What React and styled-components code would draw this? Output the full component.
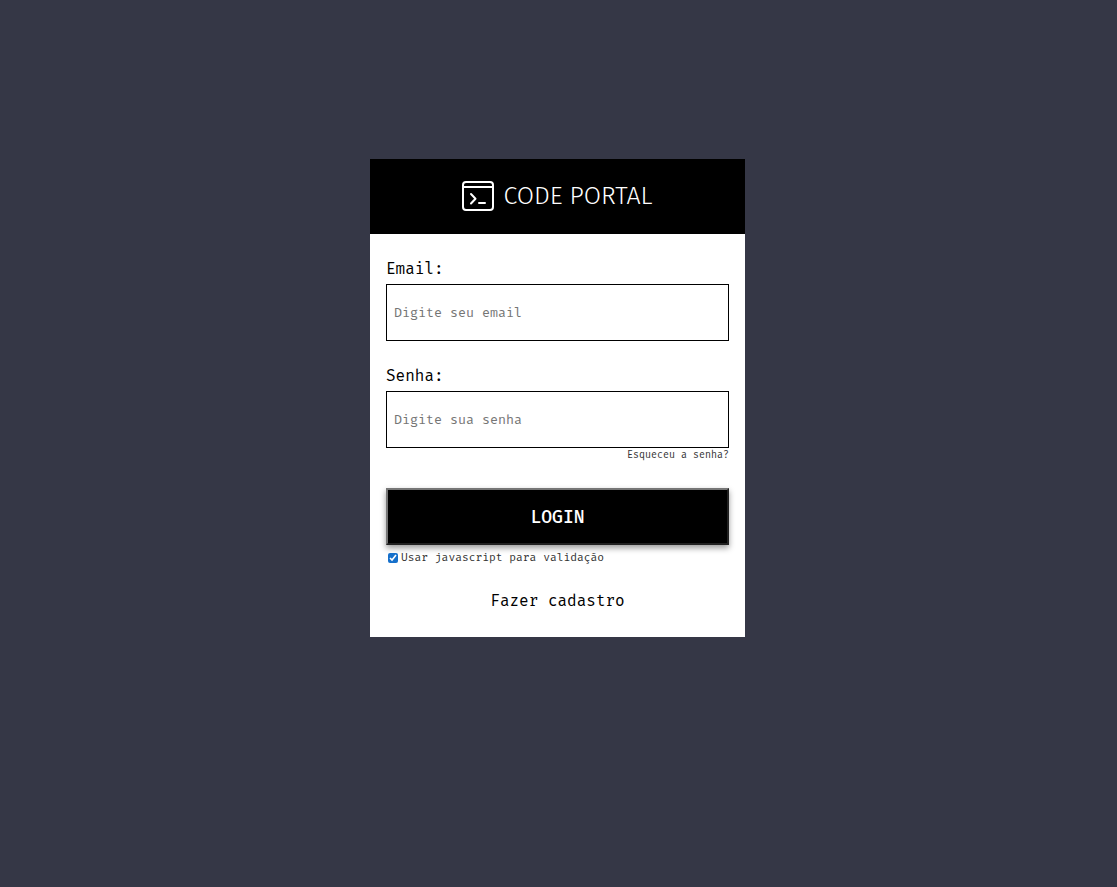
import React from "react";
import styled, { createGlobalStyle } from "styled-components";

const mono = `"Fira Mono", "Fira Code", "DejaVu Sans Mono", monospace`;
const code = `"Fira Code", "Fira Mono", "DejaVu Sans Mono", monospace`;

const GlobalStyle = createGlobalStyle`
  * {
    box-sizing: border-box;
  }
  body {
    margin: 0;
    background: #353746;
    color: #000;
    font-family: ${mono};
    font-size: 16px;
    line-height: 20px;
  }
`;

const Page = styled.main`
  display: flex;
  justify-content: center;
  align-items: flex-start;
  min-height: 100vh;
  padding: 159px 2px 24px 0;
`;

const Card = styled.section`
  width: 100%;
  max-width: 375px;
  background: #fff;
`;

const Header = styled.header`
  display: flex;
  align-items: center;
  justify-content: center;
  gap: 9px;
  padding: 20px 16px;
  background: #000;
  color: #fff;
`;

const Title = styled.h1`
  margin: 0;
  font-family: "Fira Sans", "Noto Sans", sans-serif;
  font-size: 25px;
  font-weight: 300;
  line-height: 35px;
`;

const Logo = styled.svg`
  flex: none;
  width: 32px;
  height: 32px;
`;

const Form = styled.form`
  display: flex;
  flex-direction: column;
  padding: 25px 16px 26px;
`;

const Field = styled.div`
  display: flex;
  flex-direction: column;
  gap: 5px;

  & + & {
    margin-top: 25px;
  }
`;

const Input = styled.input`
  width: 100%;
  height: 57px;
  padding: 0 7px;
  border: 1px solid #000;
  border-radius: 0;
  background: #fff;
  font-family: ${mono};

  &::placeholder {
    color: #757575;
  }
`;

const TextLink = styled.a`
  align-self: ${({ $align }) => $align};
  color: ${({ $small }) => ($small ? "#333" : "#000")};
  font-size: ${({ $small }) => ($small ? "10px" : "16px")};
  line-height: ${({ $small }) => ($small ? "14px" : "20px")};
  text-decoration: none;
`;

const LoginButton = styled.button`
  height: 57px;
  margin-top: 26px;
  border: 2px solid;
  border-color: #767676 #212121 #212121 #767676;
  border-radius: 0;
  background: #000;
  color: #fff;
  box-shadow: 0 3px 6px rgba(0, 0, 0, 0.4);
  font-family: ${mono};
  font-size: 18px;
  font-weight: 500;
  cursor: pointer;
`;

const CheckLabel = styled.label`
  display: flex;
  align-items: center;
  gap: 3px;
  margin: 6px 0 27px 2px;
  color: #333;
  font-family: ${code};
  font-size: 11px;
  line-height: 13px;
`;

const Checkbox = styled.input`
  width: 10px;
  height: 10px;
  margin: 0;
  accent-color: #1670cb;
`;

export default function App() {
  return (
    <>
      <GlobalStyle />
      <Page>
        <Card>
          <Header>
            <Logo
              viewBox="0 0 32 32"
              fill="none"
              stroke="#fff"
              strokeWidth="2"
              strokeLinecap="round"
              strokeLinejoin="round"
              aria-hidden="true"
            >
              <rect x="1" y="1" width="30" height="28" rx="3" />
              <path d="M1 6h30" />
              <path d="M9 13l4.500 4.700L9 22.500M17 22h6" />
            </Logo>
            <Title>CODE PORTAL</Title>
          </Header>
          <Form onSubmit={(event) => event.preventDefault()} noValidate>
            <Field>
              <label htmlFor="email">Email:</label>
              <Input id="email" type="email" placeholder="Digite seu email" />
            </Field>
            <Field>
              <label htmlFor="senha">Senha:</label>
              <Input id="senha" type="password" placeholder="Digite sua senha" />
            </Field>
            <TextLink href="#recuperar" $small $align="flex-end">
              Esqueceu a senha?
            </TextLink>
            <LoginButton type="submit">LOGIN</LoginButton>
            <CheckLabel>
              <Checkbox type="checkbox" defaultChecked />
              Usar javascript para validação
            </CheckLabel>
            <TextLink href="#cadastro" $align="center">
              Fazer cadastro
            </TextLink>
          </Form>
        </Card>
      </Page>
    </>
  );
}
